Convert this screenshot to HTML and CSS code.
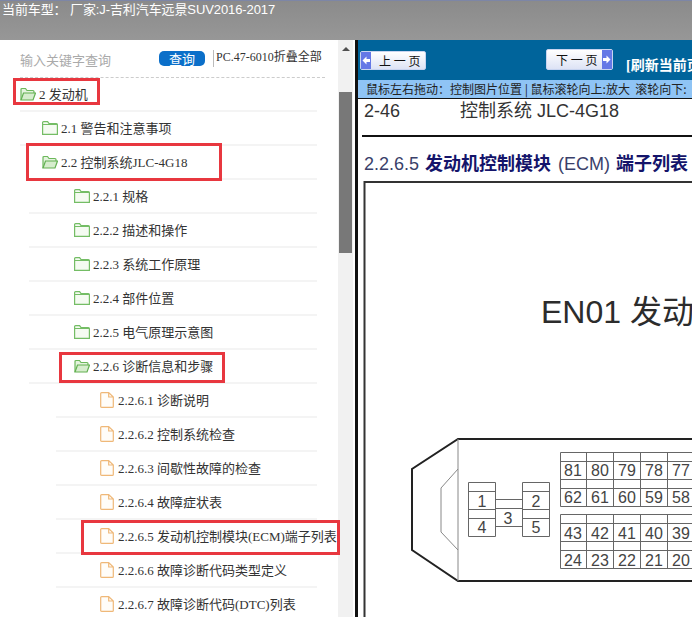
FILE: index.html
```html
<!DOCTYPE html>
<html lang="zh-CN">
<head>
    <meta charset="UTF-8">
    <meta name="viewport" content="width=device-width, initial-scale=1.0">
    <title>维修手册</title>
    <link rel="stylesheet" href="styles.css">
</head>
<body>
    <svg class="defs" width="0" height="0">
        <symbol id="folder-open" viewBox="0 0 16 14">
            <path d="M1 13V2.500q0-1 1-1h3.500l1.500 2h6q1 0 1 1V6" fill="#e4f3de" stroke="#6cb85b" stroke-width="1.200"/>
            <path d="M1 13l2.500-7H15.500l-2.500 7z" fill="#d6edcd" stroke="#62b051" stroke-width="1.200"/>
        </symbol>
        <symbol id="folder" viewBox="0 0 16 14">
            <path d="M.6 13.400V1.600q0-1 1-1h4l1.500 2h7.300q1 0 1 1v9.800z" fill="#f5fbf2" stroke="#74bd65" stroke-width="1.200"/>
            <path d="M1 3.500h14" stroke="#74bd65" fill="none"/>
        </symbol>
        <symbol id="doc" viewBox="0 0 14 16">
            <path d="M.7 1.600q0-1 1-1h7l4.600 4.400v9.400q0 1-1 1h-10.600q-1 0-1-1zM8.700.6v4.400h4.600" fill="#fffdf9" stroke="#efb878" stroke-width="1.200"/>
        </symbol>
    </svg>

    <div class="top-bar">当前车型： 厂家:J-吉利汽车远景SUV2016-2017</div>

    <div class="main">
        <div class="side">
            <div class="search-row">
                <span class="search-hint">输入关键字查询</span>
                <span class="search-btn">查询</span>
                <span class="side-tools">PC.47-6010折叠全部</span>
            </div>
            <ul class="tree">
                <li class="row lv0"><svg class="ico"><use href="#folder-open"/></svg>2 发动机<i class="mark mark-a"></i></li>
                <li class="row lv1"><svg class="ico"><use href="#folder"/></svg>2.1 警告和注意事项</li>
                <li class="row lv1b"><svg class="ico"><use href="#folder-open"/></svg>2.2 控制系统JLC-4G18<i class="mark mark-b"></i></li>
                <li class="row lv2"><svg class="ico"><use href="#folder"/></svg>2.2.1 规格</li>
                <li class="row lv2"><svg class="ico"><use href="#folder"/></svg>2.2.2 描述和操作</li>
                <li class="row lv2"><svg class="ico"><use href="#folder"/></svg>2.2.3 系统工作原理</li>
                <li class="row lv2"><svg class="ico"><use href="#folder"/></svg>2.2.4 部件位置</li>
                <li class="row lv2"><svg class="ico"><use href="#folder"/></svg>2.2.5 电气原理示意图</li>
                <li class="row lv2"><svg class="ico"><use href="#folder-open"/></svg>2.2.6 诊断信息和步骤<i class="mark mark-c"></i></li>
                <li class="row lv3"><svg class="ico doc"><use href="#doc"/></svg>2.2.6.1 诊断说明</li>
                <li class="row lv3"><svg class="ico doc"><use href="#doc"/></svg>2.2.6.2 控制系统检查</li>
                <li class="row lv3"><svg class="ico doc"><use href="#doc"/></svg>2.2.6.3 间歇性故障的检查</li>
                <li class="row lv3"><svg class="ico doc"><use href="#doc"/></svg>2.2.6.4 故障症状表</li>
                <li class="row lv3"><svg class="ico doc"><use href="#doc"/></svg>2.2.6.5 发动机控制模块(ECM)端子列表<i class="mark mark-d"></i></li>
                <li class="row lv3"><svg class="ico doc"><use href="#doc"/></svg>2.2.6.6 故障诊断代码类型定义</li>
                <li class="row lv3"><svg class="ico doc"><use href="#doc"/></svg>2.2.6.7 故障诊断代码(DTC)列表</li>
            </ul>
        </div>

        <div class="scrollbar">
            <span class="scroll-up"></span>
            <div class="scroll-thumb"></div>
        </div>

        <div class="viewer">
            <div class="toolbar">
                <span class="page-btn prev">
                    <svg class="arrow" viewBox="0 0 10 17"><path d="M1.500 8.500L5.500 4.500V7H9V10H5.500V12.500Z" fill="#fff"/></svg>上 一 页
                </span>
                <span class="page-btn next">下 一 页
                    <svg class="arrow" viewBox="0 0 10 17"><path d="M8.500 8.500L4.500 4.500V7H1V10H4.500V12.500Z" fill="#fff"/></svg>
                </span>
                <span class="refresh">[刷新当前页</span>
            </div>
            <div class="hint">鼠标左右拖动：控制图片位置 | 鼠标滚轮向上:放大&nbsp;&nbsp;滚轮向下:</div>
            <svg class="sheet" viewBox="358 99 334 518" width="334" height="518">
                <text x="364" y="117" class="d-head">2-46</text>
                <text x="460" y="117" class="d-head">控制系统 JLC-4G18</text>
                <path d="M362 136H692" stroke="#111" stroke-width="2"/>
                <text x="364" y="170" class="d-sec">2.2.6.5</text>
                <text x="425" y="170" class="d-sec d-strong">发动机控制模块</text>
                <text x="558" y="170" class="d-sec">(ECM)</text>
                <text x="616" y="170" class="d-sec d-strong">端子列表</text>
                <path d="M692 182H364.500V617" fill="none" stroke="#333" stroke-width="2"/>
                <text x="541" y="323" class="d-title">EN01 发动</text>

                <path d="M692 439H458L412 469V550L458 581H692" fill="none" stroke="#222" stroke-width="2"/>
                <path d="M458 439V581" stroke="#888"/>
                <path d="M458 469L441 488V532L458 550" fill="none" stroke="#888"/>

                <g fill="none" stroke="#666">
                    <path d="M560.500 452.500V506.500H692M560.500 452.500H692M560.500 461.500H692M560.500 479.500H692M560.500 488.500H692"/>
                    <path d="M586.500 452V506M613.500 452V506M640.500 452V506M667.500 452V506"/>
                    <path d="M560.500 514.500V568.500H692M560.500 514.500H692M560.500 523.500H692M560.500 541.500H692M560.500 550.500H692"/>
                    <path d="M586.500 514V568M613.500 514V568M640.500 514V568M667.500 514V568"/>
                    <path d="M468.500 482.500H495.500V536.500H468.500ZM468.500 491.500H495.500M468.500 509.500H495.500M468.500 518.500H495.500"/>
                    <path d="M522.500 482.500H549.500V536.500H522.500ZM522.500 491.500H549.500M522.500 509.500H549.500M522.500 518.500H549.500"/>
                    <path d="M495.500 499.500H522.500M495.500 508.500H522.500M495.500 526.500H522.500"/>
                </g>

                <g class="d-num">
                    <text x="482" y="507">1</text><text x="482" y="533">4</text>
                    <text x="536" y="507">2</text><text x="536" y="533">5</text>
                    <text x="508" y="524">3</text>
                    <text x="573" y="476">81</text><text x="600" y="476">80</text><text x="627" y="476">79</text><text x="654" y="476">78</text><text x="681" y="476">77</text>
                    <text x="573" y="503">62</text><text x="600" y="503">61</text><text x="627" y="503">60</text><text x="654" y="503">59</text><text x="681" y="503">58</text>
                    <text x="573" y="539">43</text><text x="600" y="539">42</text><text x="627" y="539">41</text><text x="654" y="539">40</text><text x="681" y="539">39</text>
                    <text x="573" y="566">24</text><text x="600" y="566">23</text><text x="627" y="566">22</text><text x="654" y="566">21</text><text x="681" y="566">20</text>
                </g>
            </svg>
        </div>
    </div>
</body>
</html>
```

FILE: styles.css
```css
html, body {
    margin: 0;
    height: 100%;
    overflow: hidden;
}
body {
    font-family: "Liberation Serif", "Noto Sans CJK SC", serif;
    background-color: #fff;
    display: flex;
    flex-direction: column;
}
.defs {
    position: absolute;
}
.top-bar {
    height: 39px;
    flex: none;
    padding-left: 2px;
    border-top: 1px solid #7d86a6;
    background: linear-gradient(#8b8b8b, #979797);
    color: #fff;
    font: 13px/17px "Liberation Sans", "Noto Sans CJK SC", sans-serif;
    letter-spacing: -0.1px;
}
.main {
    flex: 1;
    display: flex;
    min-height: 0;
}

/* left tree */
.side {
    width: 338px;
    flex: none;
}
.search-row {
    height: 37px;
    margin: 0 13px 0 20px;
    border-bottom: 1px dashed #ccc;
    display: flex;
}
.search-hint {
    width: 139px;
    margin-top: 11px;
    color: #aaa;
    font: 13px/18px "Noto Sans CJK SC", sans-serif;
}
.search-btn {
    width: 46px;
    height: 15px;
    margin-top: 11px;
    border-radius: 5px;
    background-color: #0b6fc9;
    color: #fff;
    text-align: center;
    font: 13px/15px "Noto Sans CJK SC", sans-serif;
}
.side-tools {
    height: 17px;
    margin: 10px 0 0 8px;
    padding-left: 2px;
    border-left: 1px solid #bbb;
    color: #333;
    font-size: 12px;
    line-height: 14px;
    white-space: nowrap;
}
.tree {
    list-style: none;
    margin: 0;
    padding: 0;
}
.row {
    position: relative;
    height: 31px;
    padding-bottom: 1px;
    margin-right: 21px;
    border-bottom: 2px solid #f4f4f4;
    display: flex;
    align-items: center;
    color: #333;
    font-size: 13px;
    white-space: pre;
}
.lv0 {
    margin-left: 20px;
}
.lv1 {
    margin-left: 20px;
    padding-left: 22px;
}
.lv1b {
    margin-left: 29px;
    padding-left: 13px;
}
.lv2 {
    margin-left: 29px;
    padding-left: 45px;
}
.lv3 {
    margin-left: 56px;
    padding-left: 44px;
}
.ico {
    width: 16px;
    height: 14px;
    margin-right: 3px;
    flex: none;
}
.ico.doc {
    width: 14px;
    height: 16px;
    margin-right: 4px;
}

/* red annotations drawn over the tree */
.mark {
    position: absolute;
    border: 3px solid #e8373f;
    box-sizing: border-box;
}
.mark-a {
    left: -7px;
    top: 0;
    width: 87px;
    height: 27px;
}
.mark-b {
    left: -3px;
    top: -3px;
    width: 196px;
    height: 38px;
}
.mark-c {
    left: 30px;
    top: 2px;
    width: 166px;
    height: 31px;
}
.mark-d {
    left: 25px;
    top: 0;
    width: 259px;
    height: 35px;
}

.scrollbar {
    width: 15px;
    flex: none;
    margin-right: 2px;
    background-color: #f1f1f1;
    display: flex;
    flex-direction: column;
    align-items: center;
}
.scroll-up {
    margin-top: 7px;
    border: 4px solid transparent;
    border-top: 0;
    border-bottom: 4px solid #505050;
}
.scroll-thumb {
    width: 13px;
    height: 161px;
    margin-top: 41px;
    background-color: #787878;
}

/* right viewer */
.viewer {
    flex: 1;
    min-width: 0;
    border-left: 3px solid #111;
    overflow: hidden;
}
.toolbar {
    height: 40px;
    background-color: #00649b;
    display: flex;
    align-items: flex-start;
    white-space: nowrap;
}
.page-btn {
    flex: none;
    height: 19px;
    box-sizing: border-box;
    border: 1px solid #c8d4f0;
    border-radius: 2px;
    background: linear-gradient(#fff, #dde3f5);
    display: flex;
    align-items: center;
    color: #111;
    font: 12px/16px "Noto Sans CJK SC", sans-serif;
}
.arrow {
    width: 10px;
    height: 100%;
    flex: none;
    background-color: #6478e6;
}
.prev {
    width: 66px;
    margin: 11px 0 0 2px;
}
.prev .arrow {
    margin-right: 8px;
}
.next {
    width: 67px;
    height: 21px;
    margin: 9px 0 0 120px;
    padding-left: 9px;
    justify-content: space-between;
}
.refresh {
    flex: none;
    margin: 17px 0 0 13px;
    color: #fff;
    font-size: 14px;
    line-height: 18px;
    font-weight: bold;
}
.hint {
    height: 18px;
    padding-left: 8px;
    border-bottom: 1px solid #111;
    background-color: #8fc4f5;
    color: #222;
    font: 12px/18px "Noto Sans CJK SC", sans-serif;
    white-space: nowrap;
}
.sheet {
    display: block;
    font-family: "Liberation Sans", "Noto Sans CJK SC", sans-serif;
}
.d-head {
    font-size: 18px;
    fill: #333;
}
.d-sec {
    font-size: 18px;
    fill: #3a3f6a;
}
.d-strong {
    font-weight: bold;
    fill: #14146a;
}
.d-title {
    font-size: 32px;
    fill: #2c2c2c;
}
.d-num {
    font-size: 16px;
    fill: #444;
    text-anchor: middle;
}
```
